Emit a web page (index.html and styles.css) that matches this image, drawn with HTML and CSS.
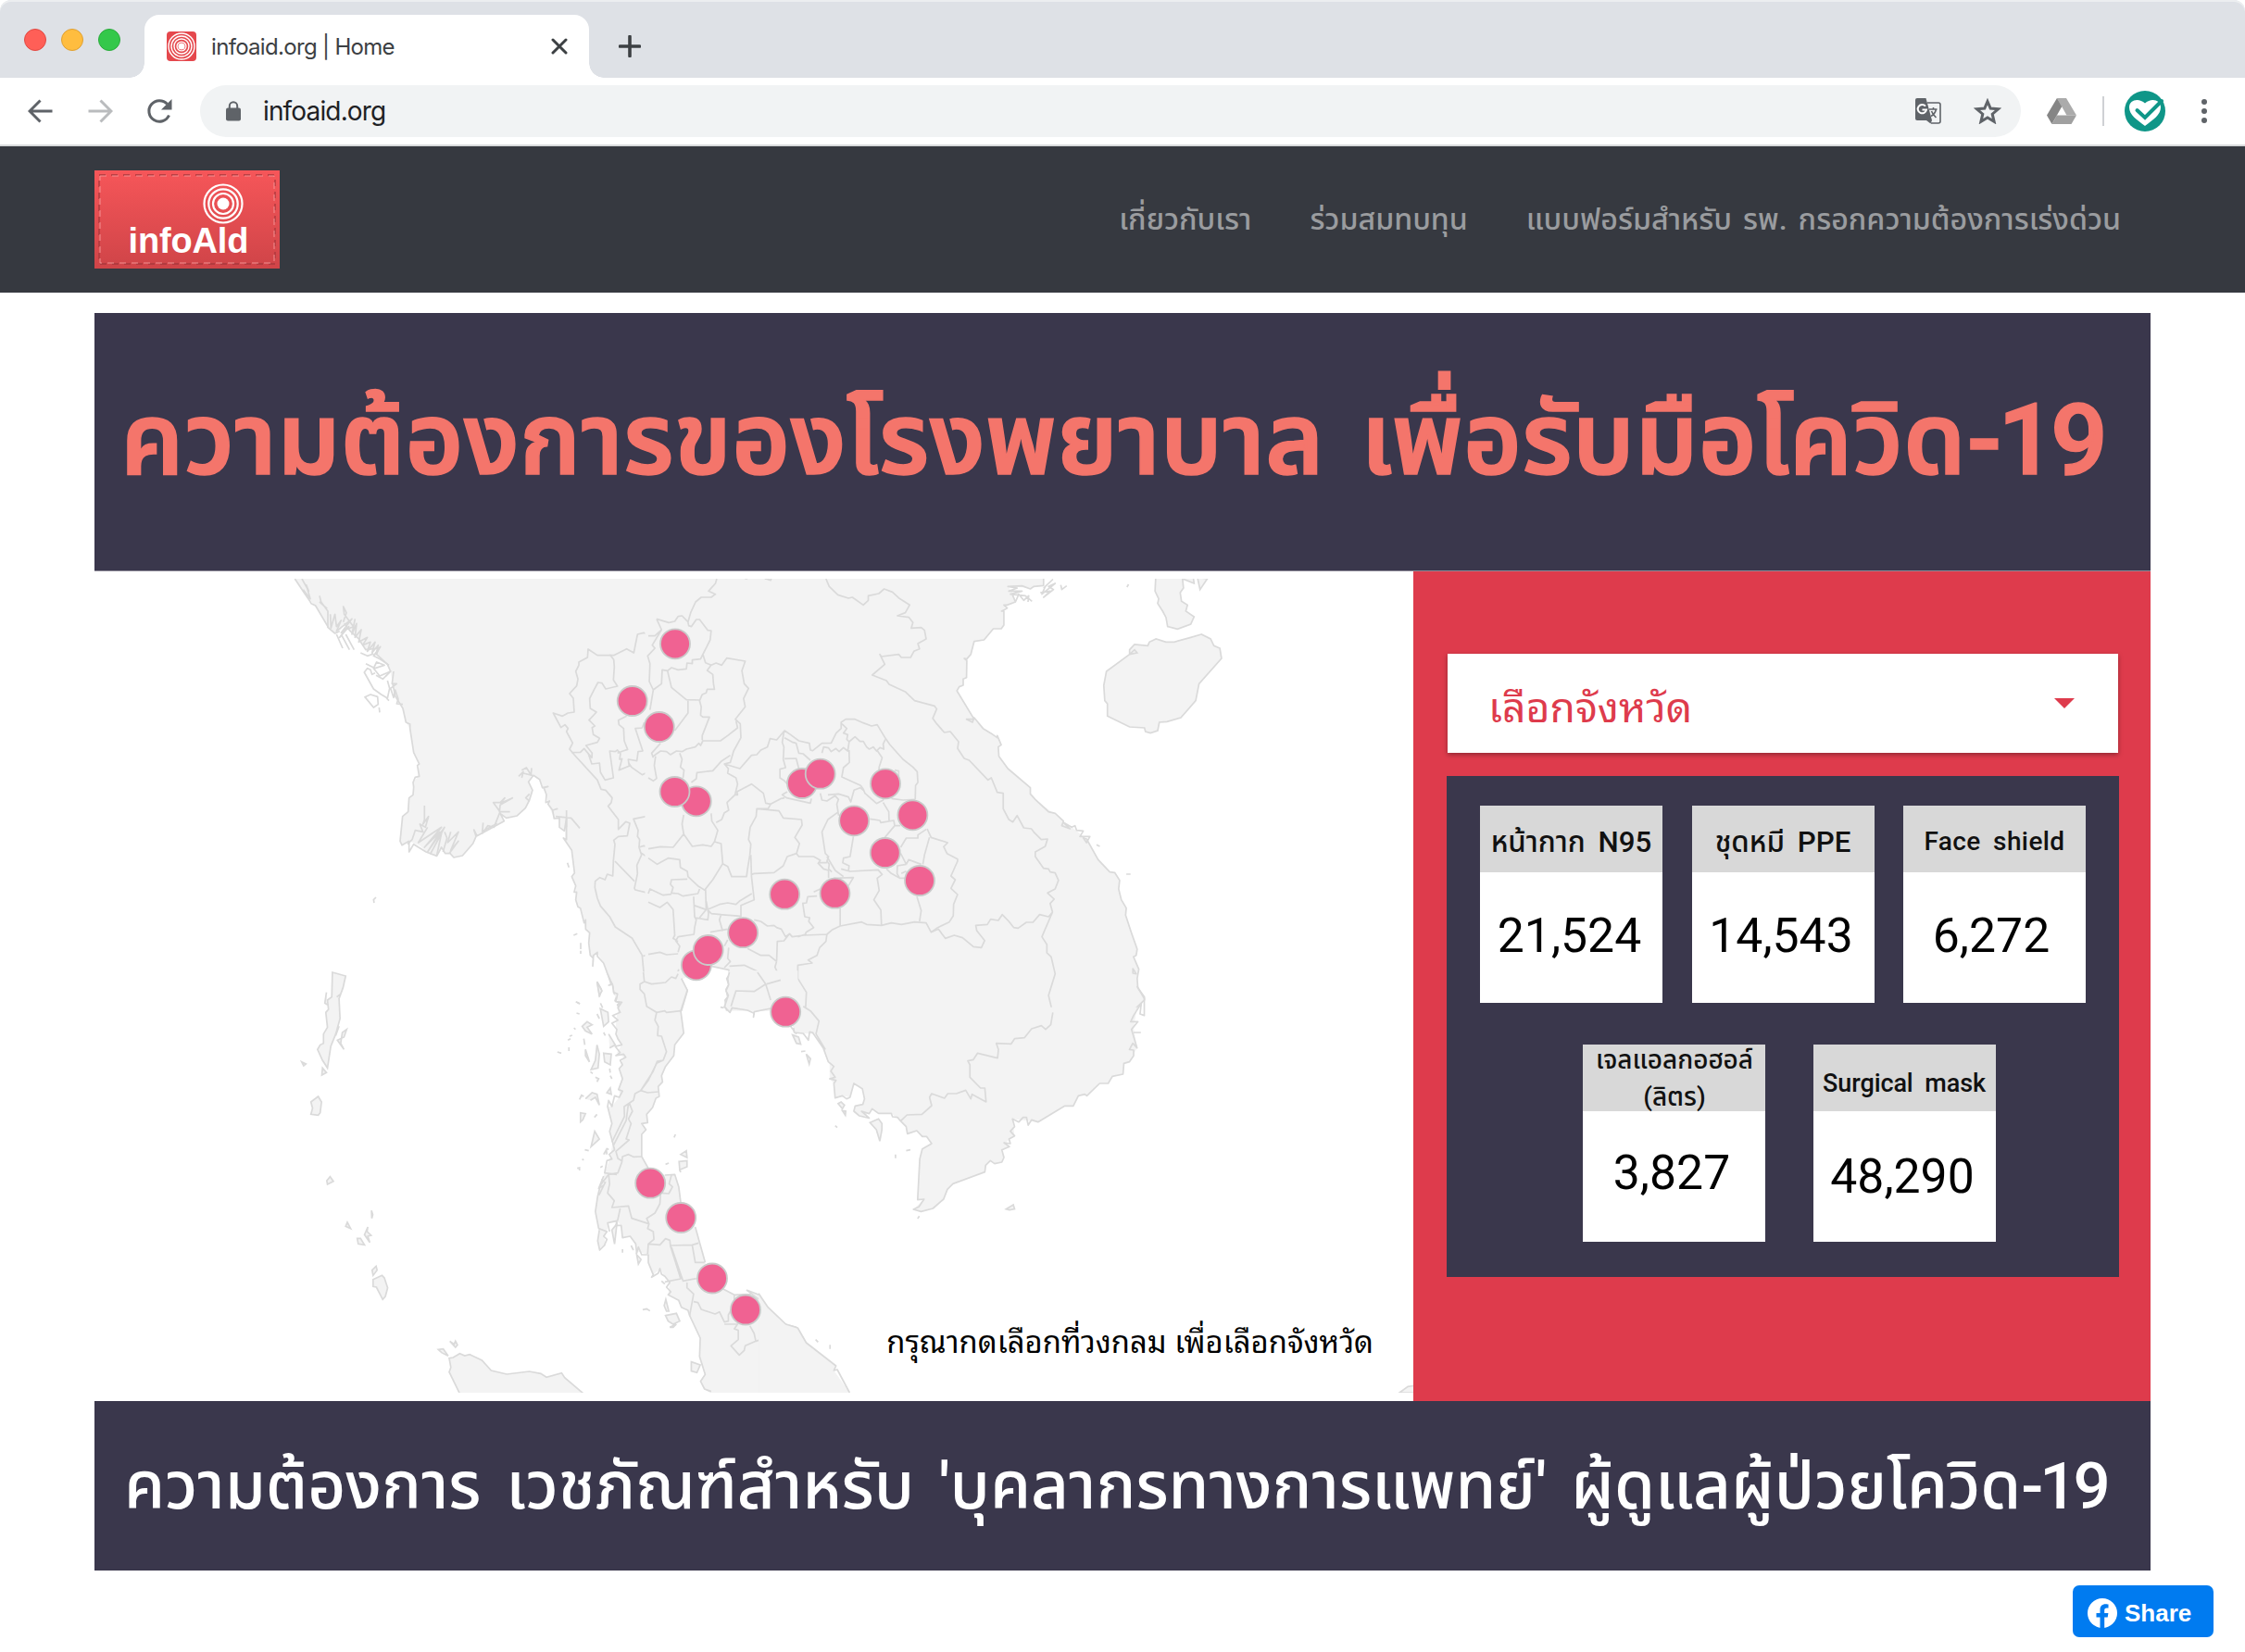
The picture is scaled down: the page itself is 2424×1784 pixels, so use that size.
FILE: index.html
```html
<!DOCTYPE html>
<html lang="th">
<head>
<meta charset="utf-8">
<title>infoaid.org | Home</title>
<link rel="stylesheet" href="styles.css">
</head>
<body>
<header class="browser">
  <div class="tabstrip">
    <div class="lights"><i class="light light-close"></i><i class="light light-min"></i><i class="light light-max"></i></div>
    <div class="tab">
      <svg class="favicon" viewBox="0 0 32 32"><rect width="32" height="32" rx="4" fill="#e5484d"/><g fill="none" stroke="#fff" stroke-width="1.4"><circle cx="16" cy="16" r="14"/><circle cx="16" cy="16" r="11"/><circle cx="16" cy="16" r="8"/></g><circle cx="16" cy="16" r="5.600" fill="#fff"/><circle cx="16" cy="16" r="4.300" fill="#e5484d"/><circle cx="16" cy="16" r="3.600" fill="#fff"/></svg>
      <span class="tab-title">infoaid.org | Home</span>
      <svg class="tab-close" viewBox="0 0 18 18"><path d="M2 2l14 14M16 2L2 16" stroke="#3c4043" stroke-width="3" stroke-linecap="round"/></svg>
    </div>
    <svg class="new-tab" viewBox="0 0 24 24"><path d="M12 1.500v21M1.500 12h21" stroke="#3c4043" stroke-width="3.600" stroke-linecap="round"/></svg>
  </div>
  <div class="toolbar">
    <svg class="nav-icon" viewBox="0 0 28 28"><path d="M26.500 14H3M13.500 2.500L2 14l11.500 11.500" fill="none" stroke="#5f6368" stroke-width="3"/></svg>
    <svg class="nav-icon" viewBox="0 0 28 28"><path d="M1.500 14H25M14.500 2.500L26 14 14.500 25.500" fill="none" stroke="#babcbe" stroke-width="3"/></svg>
    <svg class="nav-icon" viewBox="0 0 28 28"><path d="M24.500 18.500A11.300 11.300 0 1 1 22.500 6.300" fill="none" stroke="#5f6368" stroke-width="3"/><path d="M27.500 1v11.500H16z" fill="#5f6368"/></svg>
    <div class="omnibox">
      <svg class="lock" viewBox="0 0 16 22"><path d="M3.800 9V5.500a4.200 4.200 0 0 1 8.400 0V9" fill="none" stroke="#5f6368" stroke-width="2"/><rect y="7.500" width="16" height="14" rx="2" fill="#5f6368"/></svg>
      <span class="url">infoaid.org</span>
      <svg class="translate" viewBox="0 0 28 28"><path d="M13 5h12a2 2 0 0 1 2 2v18a2 2 0 0 1-2 2H17" fill="none" stroke="#5f6368" stroke-width="1.600"/><path d="M2 0h9.500L18 24H2a2 2 0 0 1-2-2V2a2 2 0 0 1 2-2z" fill="#5f6368"/><path d="M12 24h6l-1.500 3.500z" fill="#5f6368"/><path d="M11 8.600a4.700 4.700 0 1 0 1 4H7.500" fill="none" stroke="#fff" stroke-width="2"/><path d="M15 12h8.500M19.500 10v2M22.500 12c-.8 3.500-3 6-5.500 7.500M17.500 14c1 3 3 5 5 7" fill="none" stroke="#5f6368" stroke-width="1.600"/></svg>
      <svg class="star" viewBox="0 0 30 28"><path d="M15 3.500l3.200 7.600 8.300.7-6.300 5.400 1.900 8.100L15 21l-7.100 4.300 1.900-8.100-6.300-5.400 8.300-.7z" fill="none" stroke="#5f6368" stroke-width="3"/></svg>
    </div>
    <svg class="drive" viewBox="0 0 32 28"><path d="M11 0h10l11 18.500H21.500z" fill="#ababab"/><path d="M11 0l5.300 9L5.500 28 0 18.500z" fill="#858585"/><path d="M10.800 18.500H32L26.500 28h-21z" fill="#a0a0a0"/></svg>
    <i class="divider"></i>
    <svg class="avatar" viewBox="0 0 44 44"><circle cx="22" cy="22" r="22" fill="#0f9688"/><path d="M22 38C13 31 5 26 5 18c0-9 11-10.500 17-4.500 6-6 17-4.500 17 4.500 0 8-8 13-17 20z" fill="#fff"/><path d="M13.500 21l8.500 8L40 11" fill="none" stroke="#0f9688" stroke-width="4" stroke-linecap="round"/></svg>
    <svg class="kebab" viewBox="0 0 6 28"><g fill="#5f6368"><circle cx="3" cy="4" r="3"/><circle cx="3" cy="14" r="3"/><circle cx="3" cy="24" r="3"/></g></svg>
  </div>
</header>

<nav class="navbar">
  <svg class="logo" viewBox="0 0 200 106">
    <defs><linearGradient id="lg" x2="0" y2="1"><stop offset="0" stop-color="#f65659"/><stop offset="1" stop-color="#cf4448"/></linearGradient></defs>
    <rect width="200" height="106" fill="url(#lg)"/>
    <rect x="5" y="5" width="190" height="96" fill="none" stroke="#a9383c" stroke-width="1.300" stroke-dasharray="7 6"/>
    <rect x="6" y="6" width="188" height="94" fill="none" stroke="#f79a9b" stroke-width=".9" stroke-dasharray="7 6"/>
    <g fill="none" stroke="#fff" stroke-width="2.200"><circle cx="139" cy="36" r="20.500"/><circle cx="139" cy="36" r="15.700"/><circle cx="139" cy="36" r="11"/></g><circle cx="139" cy="36" r="6.500" fill="#fff"/>
    <text class="logo-text" x="36.500" y="88.500" textLength="130">infoAld</text>
  </svg>
  <div class="menu"><a>เกี่ยวกับเรา</a><a>ร่วมสมทบทุน</a><a>แบบฟอร์มสำหรับ รพ. กรอกความต้องการเร่งด่วน</a></div>
</nav>

<main class="report">
  <h1 class="title"><span>ความต้องการของโรงพยาบาล เพื่อรับมือโควิด<span class="number">-19</span></span></h1>
  <div class="body">
    <section class="map">
      <svg class="map-svg" viewBox="102 625 1424 879">
        <g class="land" transform="translate(300 610) scale(.33333)">
          <path class="fill" d="M55 45L85 90 102 115 122 132 165 205 185 222 200 215 215 190 235 215 262 240 285 275 325 270 320 290 355 322 365 345 372 385 380 425 405 465 415 510 428 530 440 608 458 645 455 685 438 705 438 745 425 755 422 800 404 815 396 895 402 908 425 895 460 910 480 930 515 943 530 915 542 935 558 935 570 948 598 942 632 903 642 880 700 848 733 830 720 805 740 820 775 813 802 788 815 762 825 730 812 703 828 682 848 695 857 722 870 745 875 775 895 822 912 825 915 850 930 865 930 890 952 925 961 998 952 1010 965 1040 965 1085 972 1108 980 1112 992 1160 997 1180 1010 1192 1007 1225 1012 1265 1022 1275 1035 1258 1055 1290 1070 1330 1085 1355 1090 1390 1105 1420 1110 1445H1270V45z"/>
          <path class="line" d="M55 45L85 90 102 115 108 125 122 132 165 205 185 222 200 215M215 190L235 215 262 240 285 275 325 270 320 290 355 322 365 345 350 360M372 385L380 425 405 465 415 510 428 516 428 530 440 608 458 645 452 650 458 685 445 688 438 705 440 720 438 745 425 755 422 800 404 815 396 895 402 908 425 895 425 930 440 905 480 930 515 943 530 915 542 935 558 935 570 948 598 942 632 903 642 880 635 858 645 878 700 848 733 830 720 805 740 820 775 813 802 788 815 762 825 730 812 703 828 682 848 695 857 722 875 718 862 722 870 745 868 770 880 765 875 775 890 795 905 790 890 795 895 822 912 820 912 850 928 862 935 820 935 890 925 885 952 925 961 998 952 1010 965 1040 960 1060 968 1060 965 1085 972 1108 980 1112 992 1160 997 1150 997 1180 1010 1192 1007 1225 1012 1265 1022 1275 1020 1300 1022 1265 1035 1255 1035 1268 1055 1290 1070 1330 1080 1360 1072 1362 1087 1355 1090 1390 1098 1395 1092 1412 1108 1420 1100 1425 1110 1445"/>
          <path class="line" d="M78 45L100 85 92 65 105 110 82 80M135 100L140 120 162 150 162 205M135 120L160 142M170 160L172 205 185 160 190 200 205 180 190 215 240 175 205 220 230 200 200 235 220 210 245 200 215 160 212 135 222 155 212 185M190 225L210 270M205 225L232 275M220 225L247 275M250 175L240 225 255 190 250 235 270 210 262 250 290 235 275 260 300 250 290 280 315 250 305 285 325 260 318 290 332 265 310 295 340 310M268 285L290 295 310 288M285 320L315 335 345 325 320 315 310 335 330 360 365 345 340 370 318 358M360 325L330 305M375 345L370 385 385 385 365 400 375 430 380 405 390 435 385 450 405 452M355 375L362 400 355 432 335 420 310 402 280 348 290 335 300 340 305 355 315 350M360 440L352 432M282 428L300 420 323 427 325 452 310 462zM328 462L330 478M475 780V825L470 840 488 815 478 850 460 840 470 865 445 860 435 890 420 905M485 850L455 900 530 850 475 915 525 865 485 930 540 850 495 935 530 870 515 940M540 865L548 885 535 930M560 865L550 900 585 865 560 925 585 895 555 935M665 835L662 870 680 845 700 850 720 800 698 770 720 770 735 755 722 772 760 755 720 778 718 800 752 800M660 865L710 838M780 685L795 670 790 690M790 665L805 657 820 680 822 658M795 675L825 682M815 742L803 755 815 765M935 795V850M900 815L950 820 978 853M938 965L943 980M312 1095L310 1085 318 1077M958 1200L970 1195M981 1225V1245M981 1250V1260M1035 1352L1048 1375 1042 1398zM965 1415L978 1422M1045 1420L1052 1435"/>
          <path class="line" d="M1260 187L1225 175 1242 210 1230 225 1207 230 1185 220 1165 225 1153 285 1130 272 1088 293 1035 293 1005 273 1003 300 975 315 975 325 965 345 972 370 968 392 945 417 957 432 960 477 940 480 922 490 892 480 917 527 930 518 940 530 935 540 955 577 945 597 960 615 1035 697 1047 727 1062 730 1083 755 1080 770 1070 782 1103 825 1103 857 1127 832 1140 837 1132 878 1103 880 1088 892 1092 905 1087 958 1085 1008 1067 1002 1060 1020 1043 1013 1028 1025 1027 1045 1035 1080 1045 1105 1075 1140 1093 1173 1148 1210 1180 1265 1188 1350 1175 1357 1173 1375 1190 1395 1195 1430 1210 1445"/>
          <path class="line" d="M1075 290L1088 307 1090 330 1087 373 1100 393 1062 402 1050 383 1037 381 1025 403 1010 433 1012 465 1032 477 1008 503 1027 522 1018 527 1022 550 1042 562 1035 575 998 585 1018 610 1017 625 992 595 980 607 952 608M1005 610L1017 645 1042 642 1045 672 1060 697 1087 690 1075 603 1093 605 1100 600 1110 612 1107 630 1115 628 1105 665 1138 652 1135 630 1163 635 1167 605 1182 603 1158 530 1180 528 1187 510M1130 490L1103 503 1105 518 1120 530 1122 570 1133 598 1118 603 1100 610M1135 640L1145 655 1180 680 1197 672 1203 705 1228 750M1197 672L1208 695 1222 702 1225 690 1220 640 1235 607 1255 603M1245 225L1217 260 1220 270 1195 300 1205 315 1203 378 1215 405 1207 478M1235 578L1212 610 1215 625 1235 607M1228 755L1200 775 1193 815 1152 823 1167 860 1165 880 1172 890 1170 915 1178 940 1163 973 1165 1000 1155 1048 1158 1053 1200 1063 1198 1085 1210 1100 1235 1110 1260 1092M1170 915L1185 910 1215 917 1260 915M1175 932L1230 970 1260 955M1092 960L1155 1025M1200 1063L1207 1050 1245 1072 1260 1065M1183 1267L1240 1257 1260 1262M1175 1357H1195L1208 1347 1225 1357 1260 1353"/>
        </g>
        <g class="land" transform="translate(700 610) scale(.35714 .33333)">
          <path class="fill" d="M-10 45H1195V67L1155 75 1087 70 1105 95 1110 120 1085 130 1068 150 1075 150V195L1067 207 1043 207 1015 243 985 248 975 290 963 305 962 365 952 370 952 390 940 395 933 408 985 500 1012 530 1035 545 1055 560 1067 583 1058 590 1060 620 1087 660 1155 722 1155 742 1170 760 1255 830 1280 850 1325 888 1360 955 1395 995 1410 997 1425 1022 1422 1050 1430 1085 1445 1112 1443 1135 1460 1190 1478 1245 1475 1265 1467 1270 1483 1310 1478 1340 1480 1370 1500 1400 1500 1410 1475 1435V1445H237L232 1410 240 1400 235 1375 243 1360 237 1340 247 1325 243 1312 190 1300 100 1343 118 1380 100 1445H-10z"/>
          <path class="line" d="M1195 45V67L1165 70 1155 78 1130 68 1087 70 1115 75 1090 85 1130 85 1095 95 1140 100 1160 118M1100 95L1110 120 1120 95 1135 115 1150 100 1148 120M1110 120L1085 130 1075 130 1085 140 1068 150 1075 150V195L1067 207 1043 207 1015 243 985 248 975 290 963 305 955 303 963 310 962 365 952 370 952 390 940 395 933 408 985 500 962 500 980 510 985 495 1012 530 1035 545 1055 560 1055 553 1067 583 1058 590 1060 620 1087 660 1155 722 1155 742 1170 760 1210 800 1230 805 1255 830 1250 845 1275 855 1255 835 1280 850 1290 845 1295 860 1315 862 1305 880 1335 880 1325 900 1315 885 1325 888 1360 955 1395 995 1410 997 1425 1022 1422 1050 1430 1085 1445 1112 1443 1135 1460 1190 1478 1245 1475 1265 1467 1270 1483 1310 1478 1340 1480 1370 1500 1400 1500 1410 1475 1435V1445M1465 1308L1475 1325 1465 1323zM1355 907L1365 912M1445 1002H1458M1447 72L1452 63M1185 90L1215 85 1195 105 1225 80 1210 70 1230 60 1190 95 1200 70 1222 48 1195 75M1247 65L1250 80 1265 68"/>
          <path class="line" d="M237 1445L232 1410 240 1400 235 1375 243 1360 237 1340 247 1325 243 1312 190 1300M100 1343L118 1380 100 1445M207 45L203 60 182 85 203 95 190 105 160 105 143 120 128 155 120 185 122 197 130 200 145 177 155 177 180 212 190 213 187 243 165 290 173 317 190 325 178 342 195 355 197 385 200 403 178 403 175 415 163 420 155 440 160 460 158 487 165 493 185 493 163 553 163 568M25 175L62 187 80 183 90 167 102 165 120 185M25 175L40 210 20 230 0 230M40 210L12 260 20 270-2 295 5 320 3 378 15 405 5 470M15 405L40 385 42 340 58 343 70 333 90 340 115 337 117 318 133 320 133 308 158 305 165 290M58 343L70 397 115 437 155 438M120 440V480L80 537M190 325L205 318 222 325 237 302 293 312 283 343 290 385 303 400 288 433 293 460 263 500 278 515 280 560 258 603 248 640 230 645 242 660 240 675 265 690 270 710 262 745M265 505L270 528 240 553 218 570 165 570 158 585 153 578 142 590 115 597 102 605 85 603 67 615 55 605 37 603 15 620M37 578L10 610 15 625M95 610L102 630 97 655 108 665 105 690M22 620L18 650 25 692 15 700 0 690M248 617L220 637 195 667 147 673 145 693 130 705M230 645L277 660 312 617 328 615 340 600 360 590 368 563 388 567 412 537 430 550 455 570 487 578 490 600 497 602 525 578 553 577 568 545 583 530 583 510 597 500 625 500 650 512 675 522 692 518 717 562 730 582 770 630 800 655 813 670 815 705 808 715 807 760"/>
          <path class="line" d="M585 515L600 530 590 545 603 550 600 565 607 573 625 557 640 572 650 572 660 590 668 597 680 590 690 603 700 592 712 597 710 580 717 565M410 540L405 575 410 590 408 630 415 657 398 662 398 690 412 700 420 710M412 560L437 575 447 578 455 610 468 612 490 633M412 628L447 627 455 660M525 610L530 590 545 593 553 605 567 595 577 605 590 592 603 603 607 575M607 600L608 640 590 657 585 687 642 715 650 727 655 740 690 773 710 762 720 735M693 603L707 625 698 655 697 665M745 665L757 668V690M420 735L405 745 418 755 490 772 493 757M520 740L525 762 540 765 565 748 575 760 570 775 575 810 595 815M543 745L575 742 605 752 612 768 622 730 640 722 650 730M735 757L770 762 807 760M710 770L727 800 728 830M670 823L700 828 703 835 742 828 745 845 715 883M742 845H762M575 800L543 825 525 865 535 935 545 945 540 960 547 970 545 985 555 995M620 880L610 945 590 950 588 965 607 975 605 993M262 745L270 745 268 735 312 710 348 740 355 772 370 775 402 757 412 755M370 775L362 790 328 790 326 815 308 850 303 890 310 905 307 940M330 790L395 797 408 820 463 825 465 843 443 883 457 903 448 935 455 945 500 945 520 957 515 965 540 965M448 935L420 945 408 975 380 997 320 1000 312 1003M310 940L312 1010 320 1085 280 1103V1140M262 745L238 770 243 795 230 803 222 825 205 835M190 805L192 830 210 860 200 897 190 912 165 907 133 912 107 872 102 840 107 810M107 872L75 915 37 913 0 920M200 897L220 903 225 968 240 977 252 1010 297 1010 300 985 307 940M225 968L195 1020 173 1050 175 1117 155 1143M0 950L27 970 60 950 95 955 97 980 118 993 120 1010 150 1040 173 1055M118 1018L70 1020 67 1035 75 1045 70 1063 90 1065 105 1073 150 1065 155 1050"/>
          <path class="line" d="M0 1065L5 1050 45 1070 70 1067M0 1093L35 1110 57 1093 75 1117 80 1200 75 1210 90 1220M137 1075L140 1140 145 1150 140 1175 138 1197 90 1205 83 1218 95 1235 90 1255M175 1090L182 1130 180 1150 142 1143M138 1103L175 1117M182 1115L215 1100 240 1095 265 1100 275 1090 313 1065M190 1130L182 1120M190 1130L220 1133 215 1150 225 1187M187 1190L240 1180M215 1133L280 1138M0 1262L35 1255 55 1263 90 1260M0 1353L25 1355 60 1332 85 1335 92 1310M243 1240L240 1275 248 1285 230 1305M240 1215L230 1235M465 1097L478 1095 482 1075 510 1073M467 1097L473 1140 488 1143 485 1155 500 1175 477 1190 475 1197 452 1205M320 1150L340 1155 360 1170 380 1168 388 1175 402 1180 415 1205 427 1195 435 1205 470 1200 540 1197 555 1183 580 1170 645 1157 660 1165 705 1168 735 1160 765 1165 805 1157 840 1160 855 1190 875 1175 910 1157 922 1137 923 1100 935 1068 915 1048 928 1020 915 1008 935 960 935 953 903 935 893 913 905 900 855 883 843 855M850 883L835 940 830 970M840 857L815 875 815 885 780 885 763 915M780 970L787 955 825 970M780 970L753 975 752 1000 760 1015 735 1000 720 985M763 935L780 970M760 1015L775 1015M765 1000L780 992M583 985L610 993 695 988 707 1003 692 1015 698 1055 682 1085 703 1118 705 1168M812 1075L825 1120 820 1155M580 1112V1168M560 1015L620 1013 605 1040M512 965L530 985 545 990 545 1015M540 945L565 990 590 1010M500 1060L520 1050M388 1283L390 1220 410 1218 427 1195M300 1243L340 1265 365 1265 388 1285M540 1197L537 1220 518 1240 510 1265 483 1280 495 1290 452 1297V1340L478 1385 475 1445M388 1285L383 1303 400 1343 417 1345 422 1330 430 1343 452 1340M245 1300L290 1297 330 1317 358 1355 400 1345M358 1357L365 1400M250 1440L265 1378 290 1372 325 1380 358 1357"/>
          <path class="line" d="M537 45L547 70 573 97 605 108 617 105 650 130 665 115 665 100 697 93 713 78 738 88 757 107 790 130 777 155 753 165 788 170 800 187 795 205 825 203 835 212 840 240 815 255 820 272 803 280 793 300 765 300 757 290 705 297 700 290 715 322 677 357 720 375 728 387 778 412 805 440 865 457 872 467 860 497 872 515 895 543 913 540 938 573 935 595 955 627 970 633 1027 697 1037 690 1055 737 1073 740V790L1090 825 1102 833 1115 812 1135 852 1158 855 1165 865 1188 890 1207 888 1200 912 1170 930 1170 945 1195 983 1210 985 1215 995 1230 998 1240 1022 1230 1050 1207 1063 1227 1083 1215 1097 1222 1125 1210 1140 1183 1133 1163 1158 1143 1158 1118 1177 1105 1175 1090 1155 1070 1133 1058 1152 1035 1148 1025 1165 990 1168 993 1185 1017 1217 1007 1240 983 1237 950 1208 925 1200 898 1210 877 1180 855 1190M1222 1125L1190 1205 1205 1230 1205 1257 1218 1270 1230 1325 1210 1395 1220 1440M292 45H300M352 45L360 46 370 50 372 45"/>
          <path class="shape" d="M1672 225L1640 235 1590 250 1565 250 1535 240 1515 250 1510 262 1470 258 1455 275V290L1385 345 1377 390 1380 440 1388 450V490L1455 525 1500 528 1503 540 1518 545 1540 537 1545 510 1568 508 1610 495 1655 440 1665 385 1733 303 1728 270 1710 262 1700 240zM1455 290L1478 285 1470 275z"/>
          <path class="shape" d="M1535 20L1532 85 1543 110 1540 125 1555 150 1565 170 1570 200 1600 208 1640 192 1650 168 1625 150 1630 130 1612 118 1608 90 1618 75 1615 45 1650 60 1645 20zM1660 40L1690 45 1668 80z"/>
        </g>
        <g class="land" transform="translate(300 1050) scale(.35714 .33333)">
          <path class="fill" d="M995 0L1015 45 1020 80 1035 100 1025 140 1022 170 1025 215 1040 235 1025 260 1045 275 1035 310 1042 345 1030 380 1035 400 1010 435 997 435 1010 490 1003 515 1012 550 1005 600 988 650 975 690 967 725 960 775 970 830 967 870 973 900 992 885 987 860 997 830 997 812 1025 805 1038 820 1042 860 1065 855 1082 880 1090 905 1120 915 1120 940 1135 980 1155 960 1170 985 1185 1005 1180 1045 1212 1063 1220 1085 1240 1095 1245 1112 1277 1185 1275 1245 1292 1303 1278 1325 1290 1350 1310 1365H1572V1150L1533 1140 1475 1087 1455 1045 1418 1030 1430 1040 1380 1045 1320 1015 1292 940 1275 875 1262 825 1218 745 1212 695 1200 655 1170 657 1120 635 1100 597 1100 525 1113 510 1100 490 1118 487 1115 460 1133 438 1143 408 1153 402 1150 370 1163 355 1160 335 1172 305 1197 270 1200 235 1227 197 1218 125 1238 58 1220 20 1225-3z"/>
          <path class="line" d="M995 0L1005 25 1012 40 1015 65 1027 70 1022 95 1040 97 1028 115 1035 130 1012 140 1028 155 1010 165 1025 185 1022 200 1028 215 1040 235 1020 240 1035 260 1022 270 1045 265 1052 275 1035 285 1042 300 1032 312 1042 345 1030 380 1042 385 1032 405 1018 400 1010 435 1000 415 997 435 1010 490 1003 515 1012 550 1018 575 1002 590 1010 605 995 610 988 650 1025 655M1000 655L975 690 967 725 960 775 970 830 995 840 985 855 995 865 987 885 973 900 967 870 972 835M985 660L970 700 985 690 972 720 990 680 978 670M1003 840L997 812 1025 805 1022 820 1038 820 1042 860 1065 855 1082 880 1085 910 1090 890 1100 915 1120 915 1120 940 1135 980 1130 988 1150 975 1155 960 1160 978 1170 985 1185 1005 1175 1020 1188 1035 1180 1045 1212 1063 1220 1085 1240 1095 1245 1112 1277 1185 1275 1245 1292 1303 1278 1325 1290 1350 1310 1358M1568 1150L1533 1140 1475 1087 1455 1045 1418 1030 1455 1060 1470 1085M1430 1043L1380 1045 1345 1025M1292 940L1275 875 1262 825M1218 745L1212 695 1200 655 1170 657M1120 635L1100 597 1100 525 1113 510 1100 490 1118 487 1115 460 1133 438 1143 408 1153 402 1150 370 1163 355 1160 335 1172 305 1197 270 1200 235 1227 197 1218 125 1238 58 1220 20"/>
          <path class="line" d="M1105 0L1108 30 1095 38 1095 55 1108 70 1115 110 1145 130 1140 155 1150 175 1148 205 1160 207 1175 257 1165 285 1147 288 1135 320 1097 383 1080 393 1075 415 1047 435 1048 467 1010 550M1165 285L1145 295 1120 350 1097 383M1063 425L1072 450 1060 475 1068 490 1053 540 1062 543 1022 580 1028 603 1042 612M1060 425L1053 480 1015 560M1108 30L1130 38 1172 33 1190 15 1203 20 1210 5M1145 130L1170 125 1175 130 1218 125M1097 383L1118 390 1150 387M1100 597L1075 598 1060 590 1042 597 1040 615 1028 650 1000 655 1003 685 997 715 1017 740 1010 762 1060 757 1070 797 1122 815 1115 797 1140 780 1155 750 1157 720M1160 715L1182 717 1193 695 1183 685 1190 657M1035 765L1027 805M1122 815L1118 830 1135 840 1137 865 1120 880 1118 912M1120 880L1155 883 1172 863 1185 868 1187 887 1218 993 1170 1003M1187 885L1253 883 1272 877M1253 885L1262 940 1290 940M1190 890L1225 1000 1265 992M1237 1005V1022L1257 1042 1245 1112M1257 1067L1270 1070 1280 1092 1322 1107 1335 1100 1350 1133 1362 1130 1362 1110 1380 1075 1380 1045M1350 1140L1390 1140 1380 1155 1392 1160 1392 1190 1370 1210 1395 1240 1410 1225 1413 1210 1445 1195 1440 1170 1427 1145M1445 1195L1460 1190 1475 1215 1483 1212 1495 1222 1510 1205 1513 1180 1533 1155 1533 1140"/>
          <path class="fill" d="M1365-5L1360 20 1363 40 1355 60 1362 75 1353 110 1367 130 1373 115 1440 125 1490 117 1540 150 1572 195V-5z"/>
          <path class="line" d="M1365 0L1360 20 1363 40 1355 60 1362 75 1350 112 1367 130 1373 115 1420 123 1440 133 1438 145 1440 128 1490 117M1338 113L1348 115M1370 110L1385 60 1440 62 1475 38 1450 0M1475 38L1490 90M1478 38L1520 25M1550 175L1568 200"/>
          <path class="shape" d="M165 0L205 12 197 50 185 85 188 150 175 200 160 240 150 310 135 285 120 250 128 235 138 230 138 200 150 178 145 130 153 120 150 90 163 80zM147 65L142 100 150 105M178 80L190 70M135 310L147 325 133 333zM208 185L195 195 190 230 200 250 180 220 200 210zM175 205L185 175M72 290L85 297 78 303zM100 420L122 402 132 420 128 455 122 463 100 460 105 440zM148 675L158 662 168 677 150 687zM283 772L287 785 284 797zM210 810L220 830 205 823zM272 825L262 850 278 875 272 855 282 852 270 840zM240 862H250L262 883 243 880zM285 965L297 952 300 965 288 982zM288 995L315 982 322 990 332 1022 325 1050 317 1060 298 1020 288 1018zM485 1222L500 1220 515 1243 495 1232zM520 1195L533 1205 537 1195 543 1207 537 1215z"/>
          <path class="shape" d="M550 1365L518 1295 523 1280 518 1250 530 1248 550 1235 565 1242 580 1238 617 1257 645 1290 692 1302 760 1293 795 1300 812 1312 858 1298 867 1313 924 1365zM1172 1112L1205 1105 1215 1130 1195 1140 1180 1130zM1185 1150L1205 1140 1195 1150zM1173 1060L1168 1080 1175 1098 1182 1098zM1250 1262L1277 1272 1267 1297 1250 1292zM1213 613L1237 610V630L1215 640zM1218 590L1235 578 1237 600zM1172 622L1182 618M1198 535L1202 525M1103 1093L1115 1090 1125 1097"/>
          <path class="shape" d="M965 32L980 60 972 75zM905 97L913 102M903 132L912 135M975 118L998 130 1000 160 985 175zM920 175L935 160 950 170 935 178 950 200 930 190zM895 180L900 185M877 220L885 215M882 207L890 204M880 243V255M845 258L857 262M925 215L928 235M965 235L972 265 968 310 947 315 960 285zM930 250L942 290 930 270zM985 262L1008 265 1005 300 988 290zM1000 200L1020 235 1003 245M985 195L990 205M945 322L952 328M960 340L970 345 965 355M1003 312L1005 325M1005 335L1010 345M995 390L1005 375 1008 395zM912 412L918 398 925 402M930 410L950 390 965 395 972 430 960 405 945 415M915 485L915 455 930 458 922 478zM957 470L965 460M958 515L972 540 947 565zM928 575L940 578M920 605L925 608M905 635L912 633 912 642M985 590L993 575 995 590M975 632L982 628M995 570L1000 575M1010 835L1025 815 1018 880zM1042 897V908M1068 885L1075 900M1085 915L1098 930 1090 945zM965 135L972 150M1160 1000L1170 1010M1215 640L1218 648"/>
        </g>
        <g class="land" transform="translate(820 1000) scale(.45914 .33333)">
          <path class="fill" d="M45 263H888L880 330 888 395 870 440 857 445 855 480 830 487 820 510 800 510 770 550 750 550 738 583 718 583 655 635 595 625 600 680 580 700 588 715 570 725 575 750 570 765 553 770 543 760 532 775 530 797 455 835 442 853 433 885 408 915 380 925 362 918 387 885 372 887 377 755 383 722 405 705 393 682 383 682 370 663 348 673 345 650 332 632 310 607 280 607 265 592 245 620 222 600 225 583 243 578 247 560 242 527 222 510 213 555 195 550 178 557 175 510 165 495 165 440 150 395 133 350 103 348 82 345 78 320z"/>
          <path class="line" d="M888 195L905 235 905 290 895 285 898 250 880 290 873 310 890 310 875 335 888 395 878 380 870 400 880 402 880 420 870 440 857 445 855 480 830 487 820 510 800 510 770 550 765 545 750 550 738 583 718 583 655 635 640 628 632 645 628 620 620 620 610 635 595 625 600 650 590 665 600 680 587 690 590 705 575 702 588 715 570 725 575 750 570 765 553 770 543 760 532 775 530 797 455 835 442 853 433 885 408 915 380 925 362 918 375 910 387 885 372 887 377 755 383 722 405 705 393 682 383 682 370 663 348 673 345 650 332 632 325 620 313 618 310 607 280 607 265 592 258 608 240 600 258 622 235 615 222 600 225 583 243 578 247 560 242 527 222 510 213 555 205 560 195 550 178 557 175 510 180 500 165 495 178 490 168 470 175 455 162 440 150 395 125 345 118 343 115 370 103 348 82 345 80 330M103 260L120 275 140 308 133 350 155 400M880 345L897 345M690 280L685 320 673 335 663 323 640 333 623 362 600 365 592 382 557 380 562 400 560 428 513 412 503 433 490 437 495 450V490L520 525 530 525 533 570 500 545 497 560 485 532 463 543 443 543 435 558 405 543 400 555 405 582 382 610 347 612 332 632"/>
          <path class="shape" d="M260 637L280 625 288 640 288 660 283 697 275 660zM78 353L92 360 97 383 87 380zM110 415L120 430 117 447zM98 407L108 405M185 575L192 570 200 580 195 592zM195 598L203 600 202 613zM178 647L183 653M580 917L597 903 600 917 588 920zM320 740V752M345 728L355 725M376 940L372 948M132 1340L138 1348M166 1357V1370"/>
          <path class="fill" d="M-2 1190L20 1235 62 1290 90 1302 110 1350 180 1425 175 1440 212 1512H-2z"/>
          <path class="line" d="M-2 1190L20 1235 62 1290 90 1302 110 1350 180 1425 175 1440 183 1437 212 1512"/>
          <path class="shape" d="M1505 1512L1525 1492 1560 1485V1512z"/>
        </g>
        <g class="pins">
          <circle cx="729" cy="695.300" r="16"/><circle cx="682.700" cy="757" r="16"/><circle cx="711.800" cy="785" r="16"/><circle cx="751.800" cy="865.300" r="16"/><circle cx="728.500" cy="855" r="16"/><circle cx="866" cy="846" r="16"/><circle cx="885.700" cy="835.700" r="16"/><circle cx="956" cy="846.300" r="16"/><circle cx="922.200" cy="886.300" r="16"/><circle cx="985.400" cy="880.300" r="16"/><circle cx="955.700" cy="921" r="16"/><circle cx="993" cy="951" r="16"/><circle cx="847.200" cy="965.700" r="16"/><circle cx="901.500" cy="964.700" r="16"/><circle cx="802.200" cy="1007.200" r="16"/><circle cx="751.800" cy="1042.300" r="16"/><circle cx="764.700" cy="1026" r="16"/><circle cx="848.200" cy="1092.700" r="16"/><circle cx="702.200" cy="1277.700" r="16"/><circle cx="735.200" cy="1315" r="16"/><circle cx="769" cy="1380.500" r="16"/><circle cx="805" cy="1414.500" r="16"/>
        </g>
      </svg>
      <p class="hint">กรุณากดเลือกที่วงกลม เพื่อเลือกจังหวัด</p>
    </section>
    <aside class="panel">
      <div class="select"><span>เลือกจังหวัด</span><i class="caret"></i></div>
      <div class="stats">
        <div class="row">
          <div class="card"><h2 class="large">หน้ากาก N95</h2><b>21,524</b></div>
          <div class="card"><h2 class="large">ชุดหมี PPE</h2><b>14,543</b></div>
          <div class="card card-shield"><h2>Face shield</h2><b>6,272</b></div>
        </div>
        <div class="row row-two">
          <div class="card card-gel"><h2>เจลแอลกอฮอล์<br>(ลิตร)</h2><b>3,827</b></div>
          <div class="card card-mask"><h2>Surgical mask</h2><b>48,290</b></div>
        </div>
      </div>
    </aside>
  </div>
  <p class="subtitle"><span>ความต้องการ เวชภัณฑ์สำหรับ 'บุคลากรทางการแพทย์' ผู้ดูแลผู้ป่วยโควิด<span class="number">-19</span></span></p>
</main>
<a class="share"><svg viewBox="0 0 32 32"><circle cx="16" cy="16" r="16" fill="#fff"/><path d="M13.500 32V20.500H9.500V16h4v-3.500c0-4 2.300-6.200 6-6.200 1.500 0 3 .3 3 .3v4h-1.800c-1.900 0-2.500 1.100-2.500 2.300V16h4.200l-.7 4.500h-3.500V32z" fill="#007bf0"/></svg><span>Share</span></a>
</body>
</html>
```
FILE: styles.css
```css
* { box-sizing: border-box; }
body { margin: 0; width: 2424px; height: 1784px; overflow: hidden; background: #fff; font-family: Roboto, "Noto Sans Thai", sans-serif; position: relative; }
svg { display: block; flex: none; }
.browser { height: 158px; border-bottom: 2px solid #d8dadc; font-family: Inter, sans-serif; }
.tabstrip { height: 84px; display: flex; background: #dee1e6; border-radius: 12px 12px 0 0; box-shadow: inset 0 2px #eceef0; }
.lights { display: flex; gap: 16px; padding: 31px 0 0 26px; width: 156px; }
.light { width: 24px; height: 24px; border-radius: 50%; }
.light-close { background: #ff5f57; border: 1px solid #e14942; }
.light-min { background: #ffbd3f; border: 1px solid #dfa032; }
.light-max { background: #34c84a; border: 1px solid #2aab3b; }
.tab { position: relative; width: 480px; height: 68px; margin-top: 16px; background: #fff; border-radius: 16px 16px 0 0; display: flex; align-items: center; padding: 0 23px 0 24px; }
.tab::before, .tab::after { content: ""; position: absolute; bottom: 0; width: 16px; height: 16px; }
.tab::before { left: -16px; background: radial-gradient(circle at 0 0, transparent 15.5px, #fff 16px); }
.tab::after { right: -16px; background: radial-gradient(circle at 100% 0, transparent 15.5px, #fff 16px); }
.favicon { width: 32px; height: 32px; margin-right: 16px; }
.tab-title { flex: 1; font-size: 24px; color: #3c4043; letter-spacing: -.68px; }
.tab-close { width: 18px; height: 18px; }
.new-tab { width: 24px; height: 24px; margin: 38px 0 0 32px; }
.toolbar { height: 72px; display: flex; align-items: center; padding-left: 30px; }
.nav-icon { width: 28px; height: 28px; margin-right: 36px; }
.nav-icon:nth-child(3) { margin-right: 30px; }
.omnibox { width: 1966px; height: 56px; border-radius: 28px; background: #f1f3f4; display: flex; align-items: center; padding: 0 21px 0 28px; }
.lock { width: 16px; height: 22px; margin-right: 24px; }
.url { flex: 1; font-size: 28px; color: #202124; letter-spacing: -.85px; }
.translate { width: 28px; height: 28px; margin-right: 35px; }
.star { width: 30px; height: 28px; }
.drive { width: 32px; height: 28px; margin-left: 28px; }
.divider { width: 2px; height: 32px; background: #cfd1d4; margin: 0 22px 0 28px; }
.avatar { width: 44px; height: 44px; }
.kebab { width: 6px; height: 28px; margin-left: 39px; }

.navbar { height: 158px; background: #363940; display: flex; align-items: center; justify-content: space-between; padding: 0 134px 0 102px; }
.logo { width: 200px; height: 106px; }
.logo-text { font: bold 38px "Liberation Sans", Arial, sans-serif; fill: #fff; }
.menu { display: flex; gap: 63px; padding-top: 2px; font-size: 32.2px; font-weight: 500; word-spacing: 4px; color: #9a9c9f; white-space: nowrap; }

.report { width: 2220px; margin: 22px 0 0 102px; color: #fff; }
.title { margin: 0; height: 279px; background: #3a374c; border-bottom: 1px solid #8d8b98; display: flex; align-items: center; font-weight: 600; font-size: 108px; word-spacing: 13px; padding: 3px 0 0 28px; color: #f4756b; -webkit-text-stroke: 1.5px #f4756b; white-space: nowrap; }
.title .number { letter-spacing: -5px; }
.body { display: flex; height: 896px; }
.map { width: 1424px; padding-top: 8px; position: relative; }
.map-svg { width: 1424px; height: 879px; }
.fill { fill: #f3f3f3; }
.line { fill: none; stroke: #dadada; stroke-width: 1.700px; vector-effect: non-scaling-stroke; stroke-linejoin: round; }
.shape { fill: #f3f3f3; stroke: #dadada; stroke-width: 1.700px; vector-effect: non-scaling-stroke; }
.pins circle { fill: #f06292; stroke: #c9c9c9; stroke-width: 1.800px; }
.hint { position: absolute; margin: 0; right: 43px; bottom: 43px; font-family: "Noto Sans Thai Looped", Loma, Garuda, Waree, "Noto Sans Thai", sans-serif; font-size: 32.8px; line-height: 48px; color: #000; white-space: nowrap; }
.panel { width: 796px; background: #de3b4c; padding: 89px 34px 0 36px; }
.select { height: 107px; margin: 0 1px; background: #fff; display: flex; align-items: center; justify-content: space-between; padding: 0 47px 0 44px; color: #de3b4c; font-family: "Noto Sans Thai Looped", Loma, Garuda, Waree, "Noto Sans Thai", sans-serif; font-size: 44.5px; box-shadow: 0 2px 5px rgba(0,0,0,.35); }
.caret { border: 11px solid transparent; border-top: 11px solid #de3b4c; border-bottom: 0; }
.stats { margin-top: 25px; height: 541px; background: #3a374c; padding: 32px 36px 0 36px; }
.row { display: flex; justify-content: space-between; }
.row-two { justify-content: center; gap: 52px; margin: 45px 0 0 13px; }
.card { width: 197px; height: 213px; background: #fff; color: #000; text-align: center; }
.card h2 { margin: 0; height: 72px; background: #d8d8d8; font-size: 28px; line-height: 40px; font-weight: 500; word-spacing: 6px; display: flex; align-items: center; justify-content: center; padding-top: 6px; white-space: nowrap; color: #111; }
.card .large { font-size: 31.3px; padding-top: 8px; }
.card-shield h2 { letter-spacing: .4px; }
.card-gel h2 { padding: 1px 0 0 2px; }
.card-mask h2 { padding-top: 11px; font-size: 27px; letter-spacing: -.1px; }
.card b { display: block; font: 400 51.7px/138px Roboto, sans-serif; margin-left: -4px; }
.card-shield b { margin-left: -7px; }
.card-gel b { line-height: 134px; }
.card-mask b { line-height: 141px; }
.subtitle { margin: 0; height: 183px; background: #3a374c; display: flex; align-items: center; padding: 6px 0 0 32px; font-size: 70.8px; font-weight: 500; word-spacing: 9px; white-space: nowrap; }
.subtitle .number { letter-spacing: -4px; }
.share { position: absolute; left: 2238px; top: 1712px; width: 152px; height: 56px; border-radius: 7px; background: #007bf0; color: #fff; display: flex; align-items: center; padding: 4px 0 0 16px; gap: 8px; font: bold 26px "Liberation Sans", Arial, sans-serif; }
.share svg { width: 32px; height: 32px; }
```
